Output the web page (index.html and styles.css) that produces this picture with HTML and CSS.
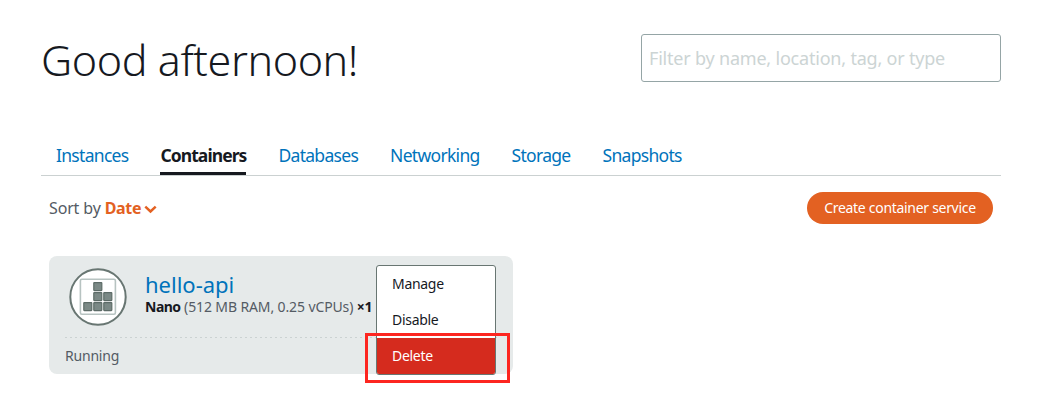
FILE: index.html
```html
<!DOCTYPE html>
<html lang="en">
<head>
<meta charset="utf-8">
<title>Containers</title>
<link rel="stylesheet" href="styles.css">
</head>
<body>
<main class="page">
  <header class="header">
    <h1 class="greeting">Good afternoon!</h1>
    <input class="filter" type="text" placeholder="Filter by name, location, tag, or type">
  </header>
  <nav class="tabs">
    <a class="tab">Instances</a>
    <a class="tab active">Containers</a>
    <a class="tab">Databases</a>
    <a class="tab">Networking</a>
    <a class="tab">Storage</a>
    <a class="tab">Snapshots</a>
  </nav>
  <div class="toolbar">
    <div class="sort">Sort by <b>Date</b>
      <svg class="chevron" width="13" height="9" viewBox="0 0 13 9"><path d="M1.3 1.7 6.5 6.5l5.2-4.8" fill="none" stroke="#e36122" stroke-width="2.5"/></svg>
    </div>
    <button class="create">Create container service</button>
  </div>
  <section class="card">
    <div class="summary">
      <svg class="logo" width="58" height="58" viewBox="0 0 58 58">
        <circle cx="29" cy="29" r="27.7" fill="#fff" stroke="#687672" stroke-width="2"/>
        <rect x="11.4" y="11.2" width="35" height="35" rx="1.5" fill="none" stroke="#b7c3c1" stroke-width="1.6"/>
        <g fill="#7b8986" stroke="#5c6b67" stroke-width="1.2">
          <rect x="24.8" y="14.6" width="8" height="8" rx=".5"/>
          <rect x="24.8" y="24.6" width="8" height="8" rx=".5"/>
          <rect x="34.8" y="24.6" width="8" height="8" rx=".5"/>
          <rect x="14.8" y="34.6" width="8" height="8" rx=".5"/>
          <rect x="24.8" y="34.6" width="8" height="8" rx=".5"/>
          <rect x="34.8" y="34.6" width="8" height="8" rx=".5"/>
        </g>
      </svg>
      <div class="details">
        <a class="name">hello-api</a>
        <div class="specs"><b>Nano</b> <span>(512 MB RAM, 0.25 vCPUs)</span> <b>×1</b></div>
      </div>
    </div>
    <svg class="divider" width="432" height="1"><path d="M0 .5h432" stroke="#cbd2d2" stroke-dasharray="2 3"/></svg>
    <div class="status">Running</div>
    <div class="menu">
      <a class="item">Manage</a>
      <a class="item">Disable</a>
      <a class="item danger">Delete</a>
    </div>
    <div class="highlight"></div>
  </section>
</main>
</body>
</html>
```
FILE: styles.css
```css
* { box-sizing: border-box; }
body {
  margin: 0;
  background: #fff;
  color: #16191f;
  font-family: "Noto Sans", sans-serif;
}
.page { width: 960px; height: 405px; margin-left: 41px; padding-top: 34px; }
.header { display: flex; justify-content: space-between; height: 48px; }
.greeting {
  margin: 0;
  font-size: 43px;
  font-weight: 300;
  line-height: 51px;
  letter-spacing: -.4px;
  white-space: nowrap;
}
.filter {
  width: 360px;
  height: 48px;
  padding: 0 7px;
  border: 1px solid #95a5a6;
  border-radius: 3px;
  font: 18px "Noto Sans", sans-serif;
  letter-spacing: -.2px;
}
.filter::placeholder { color: #ccd4d4; opacity: 1; }
.tabs {
  display: flex;
  gap: 32px;
  height: 42px;
  margin-top: 52px;
  padding-left: 15px;
  border-bottom: 1px solid #cbd1d1;
}
.tab {
  height: 41px;
  color: #0073bb;
  font-size: 17.5px;
  line-height: 43px;
  letter-spacing: -.7px;
}
.tab.active {
  border-bottom: 3px solid #16191f;
  color: #16191f;
  font-weight: 700;
  letter-spacing: -.93px;
}
.toolbar {
  display: flex;
  justify-content: space-between;
  align-items: center;
  height: 32px;
  margin-top: 16px;
  padding: 0 8px;
}
.sort { color: #545b64; font-size: 16px; letter-spacing: -.15px; }
.sort b { color: #e36122; letter-spacing: -.3px; }
.chevron { margin-left: -1px; }
.create {
  width: 186px;
  height: 32px;
  padding: 0 0 1px;
  border: 0;
  border-radius: 16px;
  background: #e36122;
  color: #fff;
  font: 14px "Noto Sans", sans-serif;
  letter-spacing: -.3px;
}
.card {
  position: relative;
  width: 464px;
  height: 118px;
  margin: 32px 0 0 8px;
  padding: 12px 16px 0;
  border-radius: 8px;
  background: #e6eaea;
}
.summary { display: flex; gap: 18px; height: 69px; padding-left: 4px; }
.logo { flex: none; }
.details { padding-top: 3px; white-space: nowrap; }
.name { display: block; color: #0073bb; font-size: 22px; line-height: 27px; }
.specs { padding-top: 1px; font-size: 14px; line-height: 16px; letter-spacing: -.17px; }
.specs b:first-child { letter-spacing: -.5px; }
.specs span, .status { color: #545b64; }
.specs span { letter-spacing: -.12px; }
.divider { display: block; }
.status { padding-top: 9px; font-size: 14px; line-height: 18px; letter-spacing: -.2px; }
.menu {
  position: absolute;
  left: 327px;
  top: 9px;
  width: 120px;
  height: 110px;
  overflow: hidden;
  border: 1px solid #687672;
  border-radius: 3px;
  background: #fff;
}
.item {
  display: block;
  height: 36px;
  padding-left: 15px;
  font-size: 14px;
  line-height: 35px;
  letter-spacing: -.3px;
}
.danger { background: #d52b1e; color: #fff; }
.highlight {
  position: absolute;
  left: 316px;
  top: 77px;
  width: 145px;
  height: 50px;
  border: 3px solid #fd2620;
}
```
